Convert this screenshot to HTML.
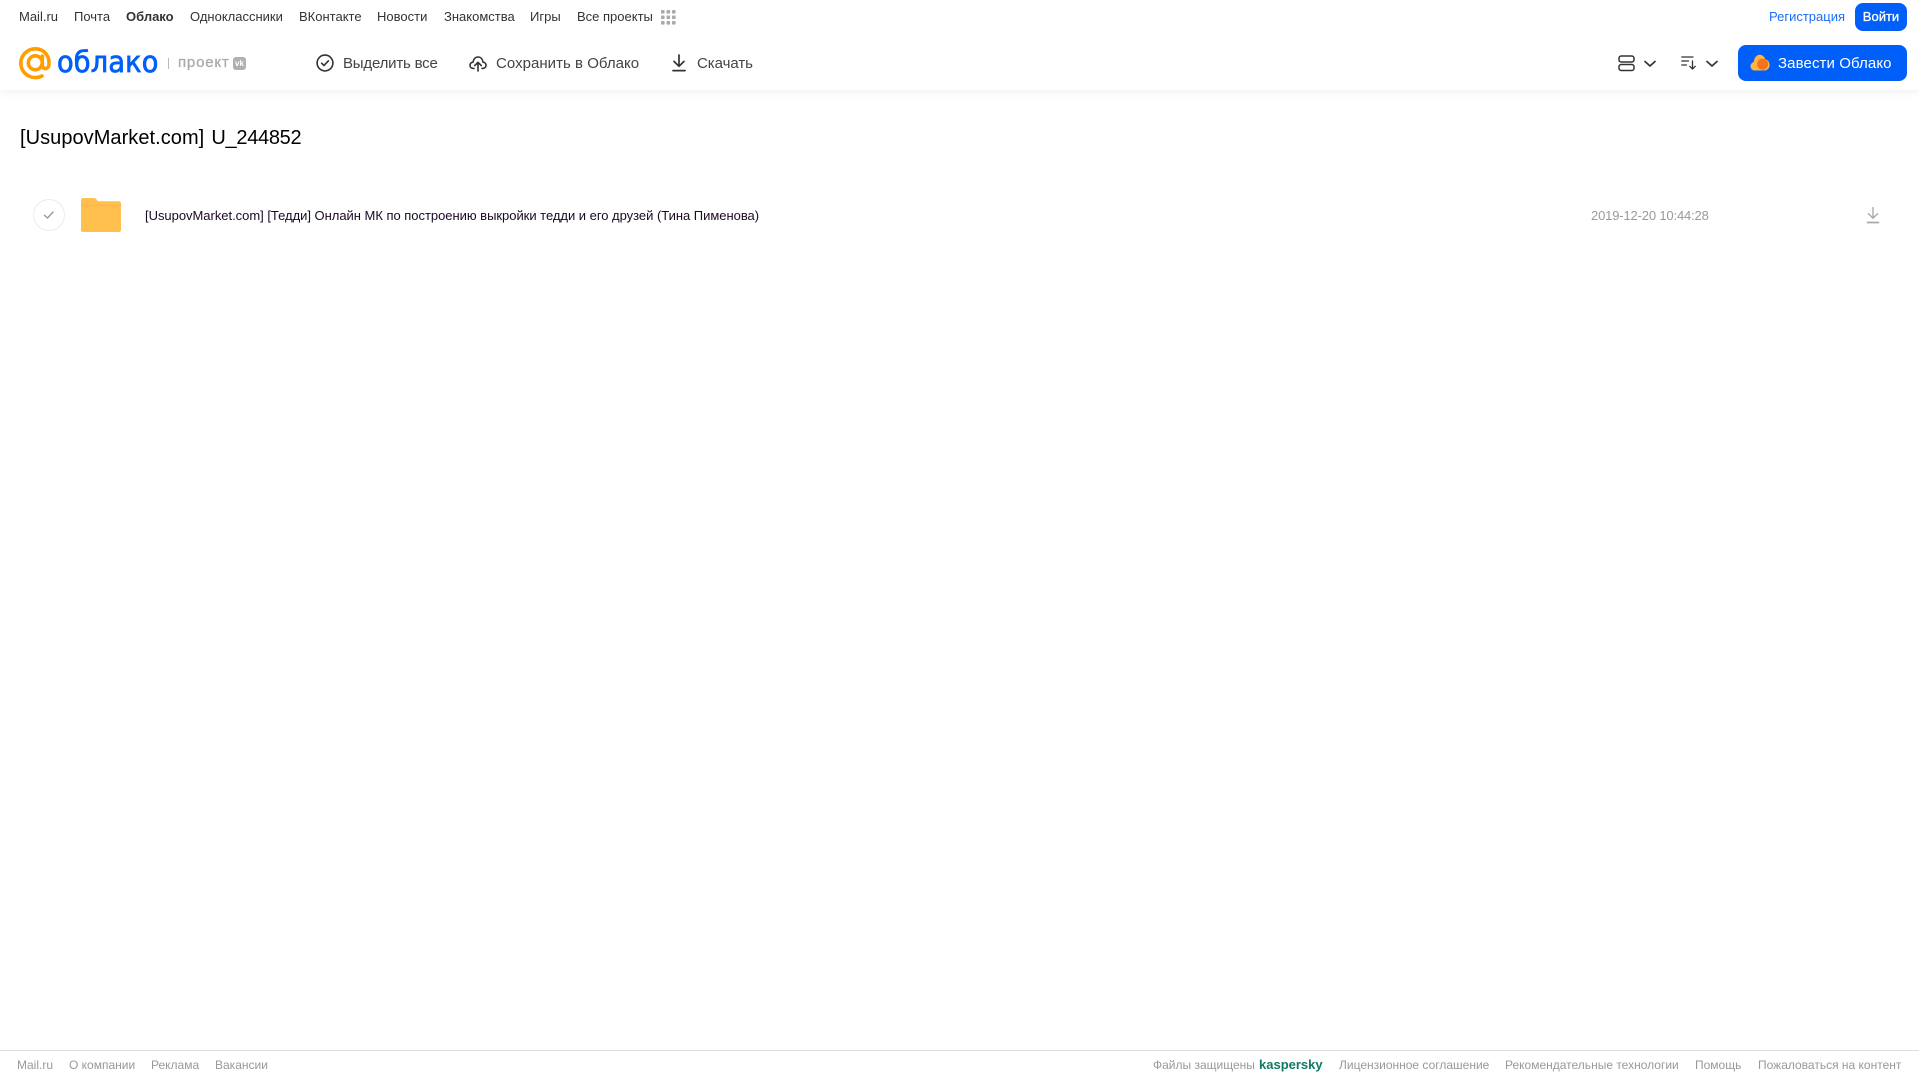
<!DOCTYPE html>
<html lang="ru">
<head>
<meta charset="utf-8">
<title>[UsupovMarket.com] U_244852</title>
<style>
html,body{margin:0;padding:0;background:#fff;width:1919px;height:1079px;overflow:hidden;font-family:"Liberation Sans",Arial,sans-serif;}
.a{position:absolute;white-space:nowrap;display:block;}
.n{font-size:13px;line-height:16px;top:9px;color:#333;}
.t{font-size:15px;line-height:18px;top:55px;color:#444;}
.f{font-size:12px;line-height:14px;top:1058px;color:#999;}
#hdr{position:absolute;left:0;top:0;width:1919px;height:90px;background:#fff;box-shadow:0 1px 10px rgba(0,0,0,.07);}
svg{position:absolute;display:block;overflow:visible;}
</style>
</head>
<body>
<div id="hdr"></div>

<span class="a n" style="left:19px">Mail.ru</span>
<span class="a n" style="left:74px">Почта</span>
<span class="a n" style="left:126px;font-weight:bold;color:#333">Облако</span>
<span class="a n" style="left:190px">Одноклассники</span>
<span class="a n" style="left:299px">ВКонтакте</span>
<span class="a n" style="left:377px">Новости</span>
<span class="a n" style="left:444px">Знакомства</span>
<span class="a n" style="left:530px">Игры</span>
<span class="a n" style="left:577px">Все проекты</span>
<svg style="left:661px;top:10px" width="15" height="15" fill="#aaa">
<rect x="0" y="0" width="3.6" height="3.6" rx=".8"/><rect x="5.5" y="0" width="3.6" height="3.6" rx=".8"/><rect x="11" y="0" width="3.6" height="3.6" rx=".8"/>
<rect x="0" y="5.5" width="3.6" height="3.6" rx=".8"/><rect x="5.5" y="5.5" width="3.6" height="3.6" rx=".8"/><rect x="11" y="5.5" width="3.6" height="3.6" rx=".8"/>
<rect x="0" y="11" width="3.6" height="3.6" rx=".8"/><rect x="5.5" y="11" width="3.6" height="3.6" rx=".8"/><rect x="11" y="11" width="3.6" height="3.6" rx=".8"/>
</svg>

<span class="a n" style="left:1769px;color:#1a6ff5">Регистрация</span>
<div class="a" style="left:1855px;top:3px;width:52px;height:28px;border-radius:8px;background:#005ff9;color:#fff;font-size:13px;line-height:27px;text-align:center;-webkit-text-stroke:.3px #fff">Войти</div>

<!-- logo -->
<svg style="left:19px;top:47px" width="33" height="33" viewBox="0 0 33 33" fill="none">
<circle cx="16.3" cy="15.8" r="7" stroke="#ff9e00" stroke-width="3.6"/>
<path d="M23.3 9.2V18.5C23.3 22.8 29.6 22.8 30 17.5C30.7 8.3 24.5 1.8 16.3 1.8C8.3 1.8 1.8 8.3 1.8 16.2C1.8 24.2 8.3 30.6 16.3 30.6C18.8 30.6 21 30 23 29" stroke="#ff9e00" stroke-width="3.6" stroke-linecap="round"/>
</svg>
<span class="a" style="left:57px;top:44px;font-size:29px;line-height:36px;color:#005ff9;letter-spacing:.2px;font-family:'DejaVu Sans',sans-serif;transform-origin:0 50%;transform:scaleX(.937);-webkit-text-stroke:.8px #005ff9">облако</span>
<div class="a" style="left:168px;top:58px;width:1px;height:11px;background:#bbb"></div>
<span class="a" style="left:178px;top:54px;font-size:15px;line-height:18px;color:#aaa;letter-spacing:.8px;-webkit-text-stroke:.3px #aaa">проект</span>
<div class="a" style="left:233px;top:57px;width:13px;height:13px;border-radius:3px;background:#b0b0b0"></div>
<span class="a" style="left:233px;top:57px;width:13px;height:13px;font-size:8px;line-height:13px;font-weight:bold;color:#fff;text-align:center">vk</span>

<!-- toolbar -->
<svg style="left:316px;top:54px" width="18" height="18" viewBox="0 0 18 18" fill="none" stroke="#333" stroke-width="1.6">
<circle cx="9" cy="9" r="7.9"/><path d="M5.6 9.2L8 11.5L12.4 6.8" stroke-linecap="round" stroke-linejoin="round"/>
</svg>
<span class="a t" style="left:343px;letter-spacing:-.2px">Выделить все</span>
<svg style="left:469px;top:54px" width="18" height="18" viewBox="0 0 18 18" fill="none" stroke="#333" stroke-width="1.6" stroke-linecap="round" stroke-linejoin="round">
<path d="M5 14.4H4.2C2.3 14.4 1 13 1 11.3C1 9.5 2.4 8.2 4 8.2C4.4 5.2 6.4 3 9 3C11.7 3 13.6 5.2 14 8.2C15.7 8.2 17 9.5 17 11.3C17 13 15.7 14.4 13.8 14.4H13"/>
<path d="M9 17V8.5M5.8 11.5L9 8.3L12.2 11.5"/>
</svg>
<span class="a t" style="left:496px;letter-spacing:.03px">Сохранить в Облако</span>
<svg style="left:671px;top:54px" width="16" height="18" viewBox="0 0 16 18" fill="none" stroke="#333" stroke-width="1.7" stroke-linecap="round" stroke-linejoin="round">
<path d="M8 1V12M3 7.4L8 12.3L13 7.4"/><path d="M2 16.6H14"/>
</svg>
<span class="a t" style="left:697px;letter-spacing:-.05px">Скачать</span>

<!-- view / sort -->
<svg style="left:1618px;top:55px" width="18" height="17" viewBox="0 0 18 17" fill="none" stroke="#333" stroke-width="1.5">
<rect x="1" y="1" width="15" height="6" rx="2.2"/><rect x="1" y="9.5" width="15" height="6" rx="2.2"/>
</svg>
<svg style="left:1644px;top:60px" width="12" height="8" viewBox="0 0 12 8" fill="none" stroke="#333" stroke-width="1.7" stroke-linecap="round" stroke-linejoin="round">
<path d="M1 1.5L6 6L11 1.5"/>
</svg>
<svg style="left:1681px;top:56px" width="16" height="14" viewBox="0 0 16 14" fill="none" stroke="#333" stroke-width="1.3" stroke-linecap="round" stroke-linejoin="round">
<path d="M.8 1H12M.8 5H7.5M.8 9H5.5M11.5 5V13M8.8 10.3L11.5 13L14.2 10.3"/>
</svg>
<svg style="left:1706px;top:60px" width="12" height="8" viewBox="0 0 12 8" fill="none" stroke="#333" stroke-width="1.7" stroke-linecap="round" stroke-linejoin="round">
<path d="M1 1.5L6 6L11 1.5"/>
</svg>

<div class="a" style="left:1738px;top:45px;width:169px;height:36px;border-radius:8px;background:#005ff9"></div>
<svg style="left:1750px;top:54px" width="20" height="17" viewBox="0 0 20 17">
<path d="M5 16.5C2.3 16.5.5 14.6.5 12.2C.5 10 2 8.5 3.8 8C4.2 3.7 6.6.8 9.6.8C12.5.8 14.5 2.8 15.3 5.3C17.8 5.8 19.6 8.2 19.6 11C19.6 14 17.4 16.5 14.4 16.5Z" fill="#ffb340"/>
<circle cx="12.6" cy="10.2" r="5.5" fill="#f5721f"/>
</svg>
<span class="a" style="left:1778px;top:55px;font-size:15px;line-height:18px;color:#fff;letter-spacing:.1px">Завести Облако</span>

<!-- title -->
<h1 class="a" style="left:20px;top:125px;margin:0;font-size:20px;line-height:26px;font-weight:normal;color:#000;letter-spacing:.05px">[UsupovMarket.com] <span style="margin-left:1.5px;letter-spacing:-.3px">U_244852</span></h1>

<!-- row -->
<div class="a" style="left:33px;top:199px;width:30px;height:30px;border-radius:50%;border:1px solid #ececec"></div>
<svg style="left:43px;top:210px" width="12" height="10" viewBox="0 0 12 10" fill="none" stroke="#999" stroke-width="1.4" stroke-linecap="round" stroke-linejoin="round">
<path d="M1.5 5.2L4.5 8L10 2"/>
</svg>
<svg style="left:81px;top:198px" width="40" height="34" viewBox="0 0 40 34">
<path d="M2 0H12.5C14 0 15 .6 16 2L17 3.2H38C39.1 3.2 40 4.1 40 5.2V32C40 33.1 39.1 34 38 34H2C.9 34 0 33.1 0 32V2C0 .9.9 0 2 0Z" fill="#ffc04d"/>
<path d="M0 8.5H40V6.5H0Z" fill="#ffb94a"/>
</svg>
<span class="a" style="left:145px;top:208px;font-size:13px;line-height:15px;color:#1a0a24;letter-spacing:-.026px">[UsupovMarket.com] [Тедди] Онлайн МК по построению выкройки тедди и его друзей (Тина Пименова)</span>
<span class="a" style="left:1591px;top:208px;font-size:13px;line-height:15px;color:#999;letter-spacing:-.16px">2019-12-20 10:44:28</span>
<svg style="left:1866px;top:206px" width="14" height="18" viewBox="0 0 14 18" fill="none" stroke="#aaa" stroke-width="1.4" stroke-linejoin="round">
<path d="M7 1V12M2 7.2L7 12.2L12 7.2"/><path d="M.8 16.5H13.2" stroke-width="1.8"/>
</svg>

<!-- footer -->
<div class="a" style="left:0;top:1050px;width:1919px;height:1px;background:#ddd"></div>
<span class="a f" style="left:17px">Mail.ru</span>
<span class="a f" style="left:69px">О компании</span>
<span class="a f" style="left:151px">Реклама</span>
<span class="a f" style="left:215px">Вакансии</span>
<span class="a f" style="left:1153px">Файлы защищены</span>
<span class="a f" style="left:1259px;font-weight:bold;font-size:13px;color:#0f7a63">kaspersky</span>
<span class="a f" style="left:1339px">Лицензионное соглашение</span>
<span class="a f" style="left:1505px">Рекомендательные технологии</span>
<span class="a f" style="left:1695px">Помощь</span>
<span class="a f" style="left:1758px">Пожаловаться на контент</span>
</body>
</html>
